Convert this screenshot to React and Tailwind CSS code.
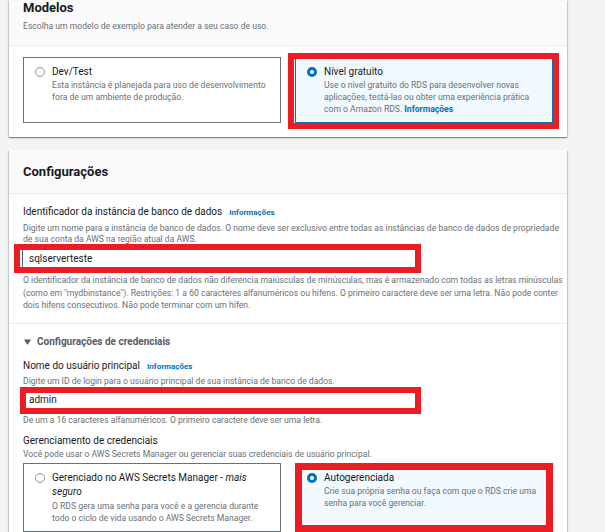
import React from "react";

const Info = () => (
  <span className="text-[8px] font-bold leading-[14px] text-[#0073bb]">Informações</span>
);

const Radio = ({ checked }) =>
  checked ? (
    <span className="mt-[2px] h-[10px] w-[10px] shrink-0 rounded-full border-[3px] border-[#0073bb] bg-white" />
  ) : (
    <span className="mt-[2px] h-[10px] w-[10px] shrink-0 rounded-full border border-[#879596] bg-white" />
  );

const Tile = ({ checked, title, children, mark }) => (
  <div
    className={`relative flex gap-[7px] border px-[11px] py-[7px] ${
      checked ? "border-[#0073bb] bg-[#f1faff]" : "border-[#687078] bg-white"
    }`}
  >
    <Radio checked={checked} />
    <div className="flex-1">
      <div className="text-[10px] leading-[14px] text-[#16191f]">{title}</div>
      <div className="whitespace-nowrap text-[8.6px] leading-[12px] text-[#687078]">{children}</div>
    </div>
    {mark && <div className={`pointer-events-none absolute border-[#ec1c24] ${mark}`} />}
  </div>
);

const MarkedInput = ({ value, className, caret }) => (
  <div className={`flex items-center border-[6px] border-[#ec1c24] bg-white ${className}`}>
    {caret && <span className="ml-[2px] h-[17px] w-px bg-[#545b64]" />}
    <span className={`text-[10px] leading-[14px] text-[#16191f] ${caret ? "ml-[6px]" : "ml-[3px]"}`}>
      {value}
    </span>
  </div>
);

const Desc = ({ children, className = "" }) => (
  <p className={`whitespace-nowrap text-[8.6px] leading-[11px] text-[#687078] ${className}`}>{children}</p>
);

const cardShadow =
  "shadow-[0_1px_1px_0_rgba(0,28,36,0.3),1px_1px_1px_0_rgba(0,28,36,0.15),-1px_1px_1px_0_rgba(0,28,36,0.15)]";

export default function App() {
  return (
    <div className="h-[532px] w-full overflow-hidden bg-[#f2f3f3] pl-[9px] font-[Roboto,'Liberation_Sans',sans-serif]">
      {/* Modelos */}
      <div className={`w-[558px] bg-white ${cardShadow}`}>
        <div className="h-[46px] border-b border-[#eaeded] bg-[#fafafa] px-[14px]">
          <h2 className="text-[13px] font-bold leading-[16px] text-[#16191f]">Modelos</h2>
          <p className="mt-[4px] text-[8.6px] leading-[12px] text-[#687078]">
            Escolha um modelo de exemplo para atender a seu caso de uso.
          </p>
        </div>
        <div className="grid grid-cols-2 gap-[14px] px-[14px] pt-[11px] pb-[14px]">
          <Tile title="Dev/Test">
            Esta instância é planejada para uso de desenvolvimento
            <br />
            fora de um ambiente de produção.
          </Tile>
          <Tile
            checked
            title="Nível gratuito"
            mark="-left-[8px] -right-[7px] -top-[5px] -bottom-[7px] border-[6px]"
          >
            Use o nível gratuito do RDS para desenvolver novas
            <br />
            aplicações, testá-las ou obter uma experiência prática
            <br />
            com o Amazon RDS. <span className="font-bold text-[#0073bb]">Informações</span>
          </Tile>
        </div>
      </div>

      {/* Configurações */}
      <div className={`mt-[13px] w-[558px] bg-white ${cardShadow}`}>
        <div className="h-[44px] border-b border-[#eaeded] bg-[#fafafa] px-[14px] pt-[14px]">
          <h2 className="text-[13px] font-bold leading-[16px] text-[#16191f]">Configurações</h2>
        </div>

        <div className="px-[14px] pt-[11px] pb-[11px]">
          <div className="flex items-baseline gap-[7px]">
            <span className="text-[10px] leading-[14px] text-[#16191f]">
              Identificador da instância de banco de dados
            </span>
            <Info />
          </div>
          <Desc className="mt-[3px]">
            Digite um nome para a instância de banco de dados. O nome deve ser exclusivo entre todas as instâncias de
            banco de dados de propriedade
            <br />
            de sua conta da AWS na região atual da AWS.
          </Desc>
          <MarkedInput value="sqlserverteste" caret className="-ml-[9px] -mt-[1px] h-[29px] w-[407px]" />
          <p className="mt-[1px] whitespace-nowrap text-[8.6px] leading-[12.5px] text-[#687078]">
            O identificador da instância de banco de dados não diferencia maiúsculas de minúsculas, mas é armazenado
            com todas as letras minúsculas
            <br />
            (como em "mydbinstance"). Restrições: 1 a 60 caracteres alfanuméricos ou hifens. O primeiro caractere deve
            ser uma letra. Não pode conter
            <br />
            dois hifens consecutivos. Não pode terminar com um hífen.
          </p>
        </div>

        <div className="border-t border-[#eaeded] px-[14px] pt-[11px] pb-[20px]">
          <div className="flex items-center gap-[6px] text-[10px] font-bold leading-[14px] text-[#545b64]">
            <svg width="7" height="6" viewBox="0 0 7 6" className="ml-[1px]">
              <path d="M0 0.5h7L3.5 6z" fill="#545b64" />
            </svg>
            Configurações de credenciais
          </div>

          <div className="mt-[10px] flex items-baseline gap-[7px]">
            <span className="text-[10px] leading-[14px] text-[#16191f]">Nome do usuário principal</span>
            <Info />
          </div>
          <Desc className="mt-[2px]">
            Digite um ID de login para o usuário principal de sua instância de banco de dados.
          </Desc>
          <MarkedInput value="admin" className="-ml-[3px] h-[27px] w-[401px]" />
          <Desc className="mt-[1px]">
            De um a 16 caracteres alfanuméricos. O primeiro caractere deve ser uma letra.
          </Desc>

          <div className="mt-[8px] text-[10px] leading-[14px] text-[#16191f]">Gerenciamento de credenciais</div>
          <Desc className="mt-[1px]">
            Você pode usar o AWS Secrets Manager ou gerenciar suas credenciais de usuário principal.
          </Desc>

          <div className="mt-[3px] grid grid-cols-2 gap-[14px]">
            <Tile
              title={
                <>
                  Gerenciado no AWS Secrets Manager - <i>mais</i>
                  <br />
                  <i>seguro</i>
                </>
              }
            >
              <span className="mt-[1px] block">
                O RDS gera uma senha para você e a gerencia durante
                <br />
                todo o ciclo de vida usando o AWS Secrets Manager.
              </span>
            </Tile>
            <Tile checked title="Autogerenciada" mark="-left-[1px] -right-[1px] -top-[1px] -bottom-[1px] border-[7px]">
              Crie sua própria senha ou faça com que o RDS crie uma
              <br />
              senha para você gerenciar.
            </Tile>
          </div>
        </div>
      </div>
    </div>
  );
}
